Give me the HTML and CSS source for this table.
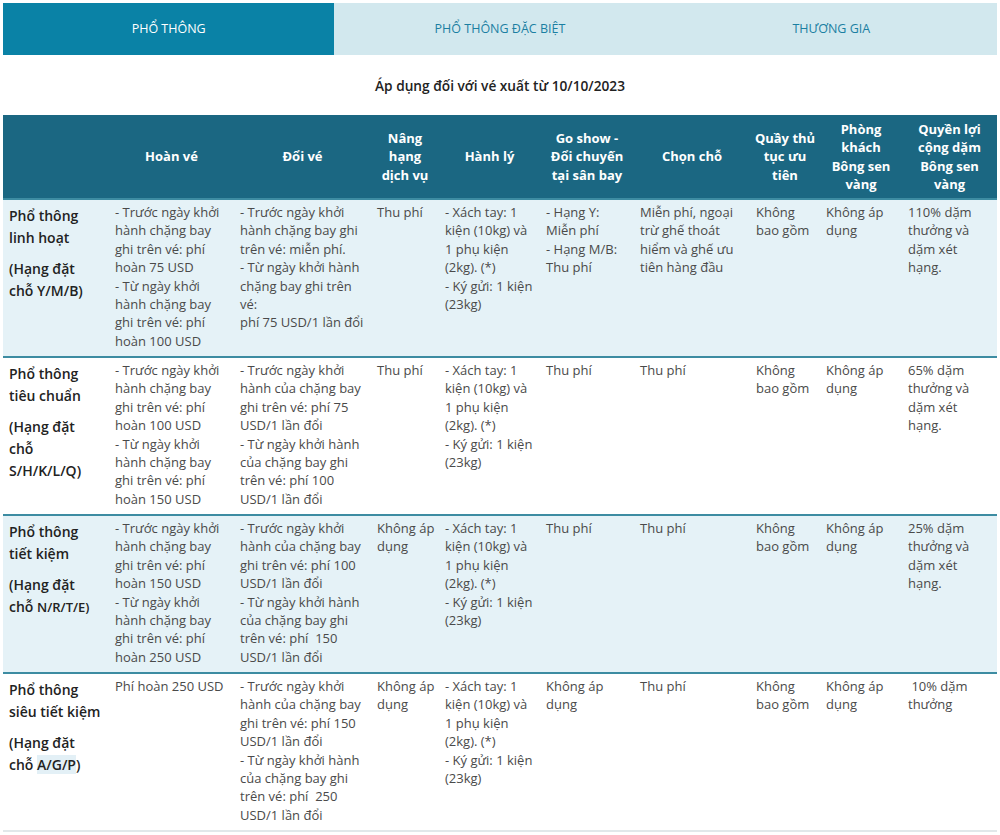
FILE: index.html
```html
<!DOCTYPE html>
<html lang="vi">
<head>
<meta charset="utf-8">
<title>Hạng vé</title>
<link rel="stylesheet" href="styles.css">
</head>
<body>
<div class="page">
  <nav class="tabs">
    <div class="tab active">PHỔ THÔNG</div>
    <div class="tab">PHỔ THÔNG ĐẶC BIỆT</div>
    <div class="tab">THƯƠNG GIA</div>
  </nav>
  <h2 class="title">Áp dụng đối với vé xuất từ 10/10/2023</h2>
  <table class="fares">
    <colgroup>
      <col class="c0"><col class="c1"><col class="c2"><col class="c3"><col class="c4">
      <col class="c5"><col class="c6"><col class="c7"><col class="c8"><col class="c9">
    </colgroup>
    <thead>
      <tr>
        <th></th>
        <th>Hoàn vé</th>
        <th>Đổi vé</th>
        <th>Nâng hạng dịch vụ</th>
        <th>Hành lý</th>
        <th>Go show - Đổi chuyến tại sân bay</th>
        <th>Chọn chỗ</th>
        <th class="tight">Quầy thủ tục ưu tiên</th>
        <th>Phòng khách Bông sen vàng</th>
        <th>Quyền lợi cộng dặm Bông sen vàng</th>
      </tr>
    </thead>
    <tbody>
      <tr class="alt">
        <td class="label"><p>Phổ thông linh hoạt</p><p>(Hạng đặt chỗ Y/M/B)</p></td>
        <td>- Trước ngày khởi hành chặng bay ghi trên vé: phí hoàn 75 USD<br>- Từ ngày khởi hành chặng bay ghi trên vé: phí hoàn 100 USD</td>
        <td>- Trước ngày khởi hành chặng bay ghi trên vé: miễn phí.<br>- Từ ngày khởi hành chặng bay ghi trên vé:<br>phí 75 USD/1 lần đổi</td>
        <td>Thu phí</td>
        <td>- Xách tay: 1 kiện (10kg) và 1 phụ kiện (2kg). (*)<br>- Ký gửi: 1 kiện (23kg)</td>
        <td>- Hạng Y: Miễn phí<br>- Hạng M/B: Thu phí</td>
        <td>Miễn phí, ngoại trừ ghế thoát hiểm và ghế ưu tiên hàng đầu</td>
        <td>Không bao gồm</td>
        <td>Không áp dụng</td>
        <td>110% dặm thưởng và dặm xét hạng.</td>
      </tr>
      <tr>
        <td class="label"><p>Phổ thông tiêu chuẩn</p><p>(Hạng đặt chỗ S/H/K/L/Q)</p></td>
        <td>- Trước ngày khởi hành chặng bay ghi trên vé: phí hoàn 100 USD<br>- Từ ngày khởi hành chặng bay ghi trên vé: phí hoàn 150 USD</td>
        <td>- Trước ngày khởi hành của chặng bay ghi trên vé: phí 75 USD/1 lần đổi<br>- Từ ngày khởi hành của chặng bay ghi trên vé: phí 100 USD/1 lần đổi</td>
        <td>Thu phí</td>
        <td>- Xách tay: 1 kiện (10kg) và 1 phụ kiện (2kg). (*)<br>- Ký gửi: 1 kiện (23kg)</td>
        <td>Thu phí</td>
        <td>Thu phí</td>
        <td>Không bao gồm</td>
        <td>Không áp dụng</td>
        <td>65% dặm thưởng và dặm xét hạng.</td>
      </tr>
      <tr class="alt">
        <td class="label"><p>Phổ thông tiết kiệm</p><p>(Hạng đặt chỗ <span class="small">N/R/T/E)</span></p></td>
        <td>- Trước ngày khởi hành chặng bay ghi trên vé: phí hoàn 150 USD<br>- Từ ngày khởi hành chặng bay ghi trên vé: phí hoàn 250 USD</td>
        <td>- Trước ngày khởi hành của chặng bay ghi trên vé: phí 100 USD/1 lần đổi<br>- Từ ngày khởi hành của chặng bay ghi trên vé: phí&nbsp; 150 USD/1 lần đổi</td>
        <td>Không áp dụng</td>
        <td>- Xách tay: 1 kiện (10kg) và 1 phụ kiện (2kg). (*)<br>- Ký gửi: 1 kiện (23kg)</td>
        <td>Thu phí</td>
        <td>Thu phí</td>
        <td>Không bao gồm</td>
        <td>Không áp dụng</td>
        <td>25% dặm thưởng và dặm xét hạng.</td>
      </tr>
      <tr class="last">
        <td class="label"><p>Phổ thông siêu tiết kiệm</p><p>(Hạng đặt chỗ <span class="mark">A/G/P</span>)</p></td>
        <td>Phí hoàn 250 USD</td>
        <td>- Trước ngày khởi hành của chặng bay ghi trên vé: phí 150 USD/1 lần đổi<br>- Từ ngày khởi hành của chặng bay ghi trên vé: phí&nbsp; 250 USD/1 lần đổi</td>
        <td>Không áp dụng</td>
        <td>- Xách tay: 1 kiện (10kg) và 1 phụ kiện (2kg). (*)<br>- Ký gửi: 1 kiện (23kg)</td>
        <td>Không áp dụng</td>
        <td>Thu phí</td>
        <td>Không bao gồm</td>
        <td>Không áp dụng</td>
        <td>&nbsp;10% dặm thưởng</td>
      </tr>
    </tbody>
  </table>
</div>
</body>
</html>
```

FILE: styles.css
```css
html, body {
  margin: 0;
  padding: 0;
  background: #ffffff;
}

body {
  padding: 3px;
  font-family: "Open Sans", "Liberation Sans", sans-serif;
  color: #4a4a4a;
}

.page {
  width: 994px;
}

.tabs {
  display: flex;
  height: 52px;
}

.tab {
  flex: 1;
  display: flex;
  align-items: center;
  justify-content: center;
  padding-bottom: 2px;
  background: #d2e8ee;
  color: #1b7fa2;
  font-size: 12.5px;
}

.tab.active {
  background: #0a82a6;
  color: #ffffff;
}

.title {
  margin: 0;
  height: 60px;
  display: flex;
  align-items: center;
  justify-content: center;
  font-size: 13.7px;
  font-weight: 600;
  color: #222222;
}

.fares {
  width: 994px;
  border-collapse: collapse;
  table-layout: fixed;
  font-size: 13px;
  line-height: 18.4px;
}

.c0 { width: 106px; }
.c1 { width: 125px; }
.c2 { width: 137px; }
.c3 { width: 68px; }
.c4 { width: 101px; }
.c5 { width: 94px; }
.c6 { width: 116px; }
.c7 { width: 70px; }
.c8 { width: 82px; }
.c9 { width: 95px; }

.fares thead tr {
  background: #1b6782;
  height: 84px;
}

.fares th {
  color: #ffffff;
  font-weight: 700;
  text-align: center;
  vertical-align: middle;
  padding: 4px 6px;
}

.fares th.tight {
  padding: 4px 2px;
}

.fares tbody tr {
  border-top: 2px solid #3d8ca2;
}

.fares tbody tr.alt {
  background: #e5f2f7;
}

.fares tbody tr.last {
  border-bottom: 2px solid #e1e8ea;
}

.fares td {
  vertical-align: top;
  padding: 3px 3px 5px 6px;
  height: 148px;
}

.fares td.label {
  color: #222222;
  font-size: 14px;
  font-weight: 600;
  line-height: 22px;
  padding: 5px 8px 3px 6px;
}

.label p {
  margin: 0 0 9px 0;
}

.label .small {
  font-size: 13px;
  line-height: 1.2;
}

.label .mark {
  background: #e3f0f6;
  line-height: 1.2;
}
```
